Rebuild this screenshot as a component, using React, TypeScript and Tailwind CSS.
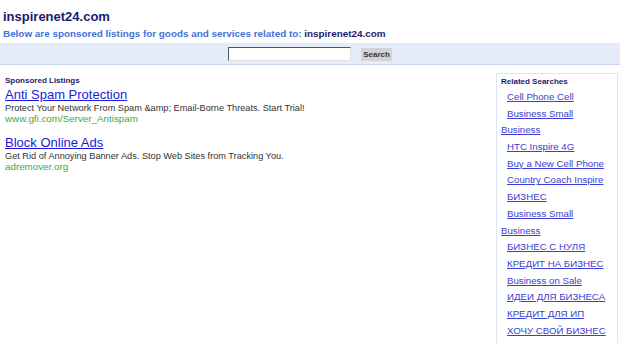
import React from 'react';

const ads = [
  {
    title: 'Anti Spam Protection',
    desc: 'Protect Your Network From Spam &amp; Email-Borne Threats. Start Trial!',
    url: 'www.gfi.com/Server_Antispam',
  },
  {
    title: 'Block Online Ads',
    desc: 'Get Rid of Annoying Banner Ads. Stop Web Sites from Tracking You.',
    url: 'adremover.org',
  },
];

// top = not indented
const related: { label: string; top?: boolean }[] = [
  { label: 'Cell Phone Cell' },
  { label: 'Business Small' },
  { label: 'Business', top: true },
  { label: 'HTC Inspire 4G' },
  { label: 'Buy a New Cell Phone' },
  { label: 'Country Coach Inspire' },
  { label: 'БИЗНЕС' },
  { label: 'Business Small' },
  { label: 'Business', top: true },
  { label: 'БИЗНЕС С НУЛЯ' },
  { label: 'КРЕДИТ НА БИЗНЕС' },
  { label: 'Business on Sale' },
  { label: 'ИДЕИ ДЛЯ БИЗНЕСА' },
  { label: 'КРЕДИТ ДЛЯ ИП' },
  { label: 'ХОЧУ СВОЙ БИЗНЕС' },
];

export default function App() {
  return (
    <div className="w-[620px] h-[343px] overflow-hidden bg-white font-['Liberation_Sans',Arial,sans-serif]">
      <div className="px-[3px] pt-[9px]">
        <h1 className="text-[13px] leading-[16px] font-bold text-[#1b1b6b]">inspirenet24.com</h1>
        <p className="mt-[2px] text-[9.9px] leading-[13px] font-bold text-[#3f72d8]">
          Below are sponsored listings for goods and services related to:{' '}
          <span className="text-[#1b1b6b]">inspirenet24.com</span>
        </p>
      </div>

      <div className="mt-[3px] h-[22px] bg-[#e5ecf9] border-b border-[#c9d7f1] flex items-center justify-center gap-[10px]">
        <input
          type="text"
          className="w-[123px] h-[14px] bg-white border border-[#e0e0e0] border-t-[#555] border-l-[#555] outline-none"
        />
        <button className="w-[31px] h-[13px] mt-[2px] bg-[#d3d3d3] text-[8px] leading-[13px] font-bold text-[#333]">
          Search
        </button>
      </div>

      <div className="flex mt-[8px]">
        <div className="flex-1 pl-[5px] pt-[3px]">
          <div className="text-[8px] leading-[10px] font-bold text-[#1b1b6b]">Sponsored Listings</div>
          <div className="mt-[1px] flex flex-col gap-[11px]">
            {ads.map((a) => (
              <div key={a.title}>
                <a href="#" className="block text-[13px] leading-[16px] text-[#1a1adb] underline">
                  {a.title}
                </a>
                <div className="text-[9.2px] leading-[11px] text-[#333]">{a.desc}</div>
                <div className="text-[9.8px] leading-[10px] text-[#3fa83f]">{a.url}</div>
              </div>
            ))}
          </div>
        </div>

        <aside className="w-[122px] mr-[2px] h-[300px] border border-[#dde5f1] pl-[4px] pt-[3px]">
          <div className="text-[8px] leading-[10px] font-bold text-[#1b1b6b]">Related Searches</div>
          <ul className="mt-[2px]">
            {related.map((r, i) => (
              <li
                key={i}
                className={
                  r.top
                    ? 'h-[16.7px] text-[9.7px] leading-[16.7px]'
                    : 'h-[16.7px] pl-[6px] text-[9.7px] leading-[16.7px]'
                }
              >
                <a href="#" className="text-[#3d3dd1] underline">
                  {r.label}
                </a>
              </li>
            ))}
          </ul>
        </aside>
      </div>
    </div>
  );
}
